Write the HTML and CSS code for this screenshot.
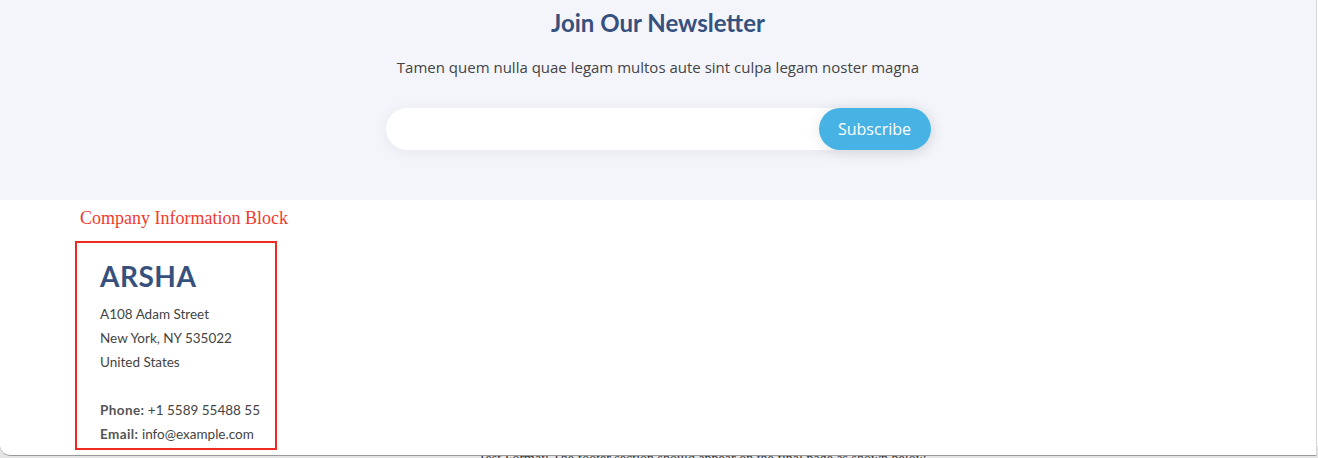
FILE: index.html
```html
<!DOCTYPE html>
<html lang="en">
<head>
<meta charset="utf-8">
<title>Newsletter</title>
<link rel="stylesheet" href="styles.css">
</head>
<body>
<div class="frame">
  <section class="newsletter">
    <h2 class="nl-title">Join Our Newsletter</h2>
    <p class="nl-sub">Tamen quem nulla quae legam multos aute sint culpa legam noster magna</p>
    <form class="nl-form">
      <input class="nl-input" type="email" aria-label="Email">
      <button class="nl-btn" type="button">Subscribe</button>
    </form>
  </section>
  <section class="footer-top">
    <div class="label">Company Information Block</div>
    <div class="company">
      <h3 class="brand">ARSHA</h3>
      <p class="addr">A108 Adam Street<br>New York, NY 535022<br>United States<br><br><strong>Phone:</strong> +1 5589 55488 55<br><strong>Email:</strong> info@example.com</p>
    </div>
  </section>
</div>
<div class="below">
  <p class="below-text">Test Format: The footer section should appear on the final page as shown below.</p>
</div>
</body>
</html>
```

FILE: styles.css
```css
html, body {
  margin: 0;
  padding: 0;
  height: 458px;
  overflow: hidden;
  background: #fff;
}
.frame {
  width: 1316px;
  height: 455px;
  border-right: 1px solid #d6d6d6;
  border-bottom: 1px solid #9a9a9a;
  border-bottom-left-radius: 10px;
  background: #fff;
  overflow: hidden;
  position: relative;
  z-index: 1;
}
.below {
  margin-top: -10px;
  height: 12px;
  background: #e4e4e4;
  padding-left: 478px;
}
.below-text {
  margin: 0;
  padding-top: 5px;
  font-family: "Liberation Serif", serif;
  font-size: 14px;
  color: #333;
  white-space: nowrap;
}
.newsletter {
  background: #f3f5fa;
  height: 200px;
  display: flex;
  flex-direction: column;
  align-items: center;
  box-sizing: border-box;
  padding-top: 8px;
}
.nl-title {
  margin: 0;
  font-family: "Lato", sans-serif;
  font-weight: 700;
  font-size: 24px;
  line-height: 30px;
  color: #37517e;
}
.nl-sub {
  margin: 17px 0 0;
  font-family: "Open Sans", sans-serif;
  font-size: 15px;
  line-height: 24px;
  color: #444;
}
.nl-form {
  margin-top: 29px;
  width: 545px;
  height: 42px;
  background: #fff;
  border-radius: 50px;
  box-shadow: 0 2px 15px rgba(0, 0, 0, 0.06);
  display: flex;
  justify-content: flex-end;
}
.nl-input {
  flex: 1;
  border: 0;
  background: transparent;
  outline: none;
}
.nl-btn {
  width: 112px;
  height: 42px;
  border: 0;
  border-radius: 50px;
  background: #47b2e4;
  color: #fff;
  font-family: "Open Sans", sans-serif;
  font-size: 16px;
  padding: 0;
  box-shadow: 0 2px 15px rgba(0, 0, 0, 0.1);
}
.footer-top {
  padding: 8px 0 0 75px;
}
.label {
  font-family: "Liberation Serif", serif;
  font-size: 18px;
  line-height: 20px;
  color: #f03a2e;
  padding-left: 5px;
}
.company {
  margin-top: 13px;
  width: 198px;
  height: 205px;
  border: 2px solid #ee2b22;
  box-sizing: content-box;
  padding: 0;
}
.brand {
  margin: 16px 0 0 23px;
  font-family: "Lato", sans-serif;
  font-weight: 700;
  font-size: 28px;
  line-height: 34px;
  color: #37517e;
  letter-spacing: 0.5px;
}
.addr {
  margin: 9px 0 0 23px;
  font-family: "Lato", sans-serif;
  font-size: 13.5px;
  line-height: 24px;
  color: #444;
}
.addr strong {
  color: #555;
  letter-spacing: 0.4px;
}
```
